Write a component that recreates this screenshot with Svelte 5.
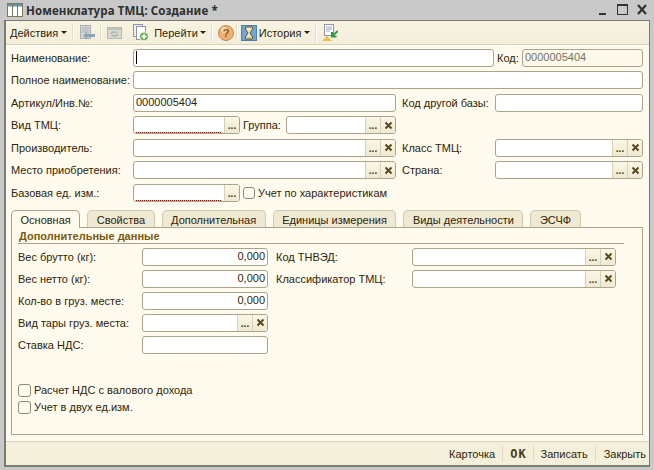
<script>
	const tabs = ['Основная', 'Свойства', 'Дополнительная', 'Единицы измерения', 'Виды деятельности', 'ЭСЧФ'];
</script>

{#snippet field(cls, opts = {})}
	<div class="field {cls}" class:off={opts.off}>
		<span class="val" class:req={opts.req} class:num={opts.num}>{#if opts.caret}<i class="caret"></i>{/if}{opts.value ?? ''}</span>
		{#if opts.pick}<span class="fbtn">...</span>{/if}
		{#if opts.clear}
			<span class="fbtn x">
				<svg viewBox="0 0 9 9" width="9" height="9"><path d="M1.500 1.500l6 6M7.500 1.500l-6 6" stroke="#54481a" stroke-width="1.900" fill="none"/></svg>
			</span>
		{/if}
	</div>
{/snippet}

{#snippet check(text)}
	<label class="check"><span class="box"></span>{text}</label>
{/snippet}

<div class="page">
	<div class="titlebar">
		<svg class="appicon" viewBox="0 0 16 14" width="16" height="14">
			<rect x="0.5" y="0.5" width="15" height="13" fill="#fff" stroke="#7d7a5c"/>
			<rect x="1" y="1" width="14" height="2.5" fill="#6f8fb0"/>
			<path d="M5.5 1v12M10.5 1v12" stroke="#7d7a5c"/>
		</svg>
		<span class="wintitle">Номенклатура ТМЦ: Создание *</span>
		<span class="caption">
			<svg viewBox="0 0 52 14" width="52" height="14">
				<path d="M2 11h7" stroke="#333" stroke-width="2"/>
				<rect x="20.5" y="1.5" width="10" height="10" fill="none" stroke="#333"/>
				<path d="M20 2h11" stroke="#333" stroke-width="2"/>
				<path d="M41 2l8 9M49 2l-8 9" stroke="#333" stroke-width="2.2"/>
			</svg>
		</span>
	</div>

	<div class="window">
		<div class="toolbar">
			<span class="tool first">Действия<i class="arrow"></i></span>
			<i class="sep"></i>
			<svg class="ico" viewBox="0 0 16 16" width="16" height="16">
				<rect x="1.5" y="0.5" width="10" height="13" fill="#d5d6d4" stroke="#a9aeb0"/>
				<path d="M3 3h7M3 5h7M3 7h7" stroke="#b0b4b6"/>
				<path d="M16 9v3H8v2.500L4 10.500 8 7v2z" fill="#8da2b3"/>
			</svg>
			<i class="sep"></i>
			<svg class="ico" viewBox="0 0 16 16" width="16" height="16">
				<rect x="0.500" y="2.500" width="14" height="11" fill="#d8dad2" stroke="#b4b8ae"/>
				<rect x="1" y="3" width="13" height="2" fill="#bcc2bc"/>
				<path d="M4 9a3.500 3 0 0 1 6-1M11 9a3.500 3 0 0 1-6 1" stroke="#9fb3a0" stroke-width="1.300" fill="none"/>
			</svg>
			<svg class="ico docs" viewBox="0 0 16 18" width="16" height="18">
				<rect x="0.500" y="0.500" width="9" height="12" fill="#eef0f2" stroke="#8b97a8"/>
				<rect x="3.500" y="2.500" width="9" height="13" fill="#fff" stroke="#8b97a8"/>
				<circle cx="11" cy="12.500" r="4.500" fill="#6fae5a" stroke="#fff"/>
				<path d="M11 10v5M8.500 12.500h5" stroke="#fff" stroke-width="1.600"/>
			</svg>
			<span class="tool go">Перейти<i class="arrow"></i></span>
			<i class="sep"></i>
			<svg class="ico" viewBox="0 0 16 16" width="16" height="16">
				<circle cx="8" cy="8" r="7.500" fill="#f2b070" stroke="#b98a5a"/>
				<circle cx="6" cy="5" r="3" fill="#f9d6ae"/>
				<text x="8" y="12" text-anchor="middle" class="q">?</text>
			</svg>
			<i class="sep tight"></i>
			<svg class="ico" viewBox="0 0 16 16" width="16" height="16">
				<rect x="0.500" y="0.500" width="15" height="15" fill="#6fa6d8" stroke="#4d7fb0"/>
				<path d="M4.500 2h7v2L9 8l2.500 4v2h-7v-2L7 8 4.500 4z" fill="#f0e6c0" stroke="#6b5a2a"/>
				<path d="M6 12.500h4v1H6z" fill="#c59a3a"/>
			</svg>
			<span class="tool hist">История<i class="arrow"></i></span>
			<i class="sep"></i>
			<svg class="ico" viewBox="0 0 16 18" width="16" height="18">
				<rect x="2.500" y="0.500" width="9" height="11" fill="#fff" stroke="#8b97a8"/>
				<path d="M4 3h6M4 5h6M4 7h4" stroke="#9aa6b4"/>
				<path d="M0 17l5-5 5 5z" fill="#e8bf50"/>
				<path d="M16 7l-6 5M10 8v4.500h4.500" stroke="#2f9a3c" stroke-width="2" fill="none"/>
			</svg>
		</div>

		<div class="form">
			<div class="row">
				<span class="lbl main">Наименование:</span>
				{@render field('w361', { caret: true })}
				<span class="lbl kod">Код:</span>
				{@render field('w121', { value: '0000005404', off: true })}
			</div>
			<div class="row">
				<span class="lbl main">Полное наименование:</span>
				{@render field('w510')}
			</div>
			<div class="row">
				<span class="lbl main">Артикул/Инв.№:</span>
				{@render field('w263', { value: '0000005404' })}
				<span class="lbl side">Код другой базы:</span>
				{@render field('w148')}
			</div>
			<div class="row">
				<span class="lbl main">Вид ТМЦ:</span>
				{@render field('w107', { req: true, pick: true })}
				<span class="lbl grp">Группа:</span>
				{@render field('w110', { pick: true, clear: true })}
			</div>
			<div class="row">
				<span class="lbl main">Производитель:</span>
				{@render field('w263', { pick: true, clear: true })}
				<span class="lbl side">Класс ТМЦ:</span>
				{@render field('w148', { pick: true, clear: true })}
			</div>
			<div class="row">
				<span class="lbl main">Место приобретения:</span>
				{@render field('w263', { pick: true, clear: true })}
				<span class="lbl side">Страна:</span>
				{@render field('w148', { pick: true, clear: true })}
			</div>
			<div class="row">
				<span class="lbl main">Базовая ед. изм.:</span>
				{@render field('w107', { req: true, pick: true })}
				{@render check('Учет по характеристикам')}
			</div>
		</div>

		<div class="tabs">
			{#each tabs as tab, i}
				<span class="tab" class:active={i === 0}>{tab}</span>
			{/each}
		</div>

		<div class="panel">
			<div class="heading">Дополнительные данные</div>
			<div class="cols">
				<div class="col left">
					<div class="row"><span class="lbl inner">Вес брутто (кг):</span>{@render field('w126', { value: '0,000', num: true })}</div>
					<div class="row"><span class="lbl inner">Вес нетто (кг):</span>{@render field('w126', { value: '0,000', num: true })}</div>
					<div class="row"><span class="lbl inner">Кол-во в груз. месте:</span>{@render field('w126', { value: '0,000', num: true })}</div>
					<div class="row"><span class="lbl inner">Вид тары груз. места:</span>{@render field('w126', { pick: true, clear: true })}</div>
					<div class="row"><span class="lbl inner">Ставка НДС:</span>{@render field('w126')}</div>
				</div>
				<div class="col right">
					<div class="row"><span class="lbl outer">Код ТНВЭД:</span>{@render field('w204', { pick: true, clear: true })}</div>
					<div class="row"><span class="lbl outer">Классификатор ТМЦ:</span>{@render field('w204', { pick: true, clear: true })}</div>
				</div>
			</div>
			<div class="checks">
				{@render check('Расчет НДС с валового дохода')}
				{@render check('Учет в двух ед.изм.')}
			</div>
		</div>

		<div class="footer">
			<span class="act">Карточка</span>
			<span class="act ok">OK</span>
			<span class="act">Записать</span>
			<span class="act last">Закрыть</span>
		</div>
	</div>
</div>

<style>
	:global(body) {
		margin: 0;
		background: #c9c9c9;
	}

	.page {
		width: 654px;
		height: 470px;
		box-sizing: border-box;
		padding: 0 4px 3px 4px;
		display: flex;
		flex-direction: column;
		font-family: "Liberation Sans", Arial, sans-serif;
		font-size: 11px;
		color: #2e2508;
		overflow: hidden;
	}

	.titlebar {
		height: 20px;
		flex-shrink: 0;
		display: flex;
		align-items: center;
		padding-left: 3px;
	}

	.appicon { margin-right: 3px; }

	.wintitle {
		font-family: "Noto Sans", sans-serif;
		font-weight: 700;
		font-size: 11.5px;
		letter-spacing: 0.1px;
		color: #30302e;
	}

	.caption {
		margin-left: auto;
		display: flex;
		margin-right: 1px;
	}

	.window {
		flex: 1;
		min-height: 0;
		display: flex;
		flex-direction: column;
		background: #fefaed;
		border: 1px solid #7b7b74;
		border-width: 1px 1px 2px 2px;
	}

	.toolbar {
		height: 24px;
		flex-shrink: 0;
		box-sizing: border-box;
		display: flex;
		align-items: center;
		background: linear-gradient(#f8f4e2, #f3eeda);
		border-bottom: 1px solid #d8d2b8;
		padding-left: 4px;
	}

	.tool {
		display: inline-flex;
		align-items: center;
		white-space: nowrap;
	}

	.arrow {
		width: 0;
		height: 0;
		border: 3px solid transparent;
		border-top: 3px solid #2a2208;
		border-bottom: 0;
		margin-left: 3px;
	}

	.sep {
		width: 2px;
		height: 18px;
		background: #e3ddc4;
		border-right: 1px solid #fff;
		box-sizing: border-box;
		margin: 0 5px;
	}

	.sep.tight { margin: 0 3px 0 2px; }
	.docs { margin-left: 10px; }
	.go { margin-left: 5px; }
	.go .arrow { margin-left: 2px; }
	.hist { margin-left: 2px; }
	.q { font: 700 11px "Liberation Sans", sans-serif; fill: #8a5a22; }

	.form {
		display: flex;
		flex-direction: column;
		gap: 4.5px;
		padding: 3.500px 6px 0 5px;
	}

	.row {
		display: flex;
		align-items: center;
		height: 18px;
	}

	.lbl { white-space: nowrap; flex-shrink: 0; }
	.main { width: 122px; }
	.kod { width: 25px; margin-left: 3px; }
	.side { width: 93px; margin-left: 6px; }
	.grp { width: 43px; margin-left: 3px; }
	.inner { width: 124px; }
	.outer { width: 136px; }

	.field {
		height: 18px;
		box-sizing: border-box;
		display: flex;
		flex-shrink: 0;
		background: #fff;
		border: 1px solid #aaa58a;
		border-radius: 3px;
		overflow: hidden;
	}

	.field.off { background: #fcf8ea; color: #77735e; }

	.w107 { width: 107px; }
	.w110 { width: 110px; }
	.w121 { width: 121px; }
	.w126 { width: 126px; }
	.w148 { width: 148px; }
	.w204 { width: 204px; }
	.w263 { width: 263px; }
	.w361 { width: 361px; }
	.w510 { width: 510px; }

	.val {
		flex: 1;
		min-width: 0;
		padding: 0 2px;
		line-height: 15px;
		display: flex;
		align-items: center;
	}

	.val.num { justify-content: flex-end; }

	.val.req {
		margin: 0 2px 0;
		padding: 0;
		background: repeating-linear-gradient(90deg, #a01010 0 1px, #f0b8b8 1px 2px) left bottom / 100% 1px no-repeat;
	}

	.caret { width: 1px; height: 13px; background: #000; }

	.fbtn {
		width: 15px;
		flex-shrink: 0;
		box-sizing: border-box;
		display: flex;
		align-items: flex-end;
		justify-content: center;
		background: linear-gradient(#fbf7e6, #efe9d2);
		border-left: 1px solid #d5d0b6;
		font-weight: 700;
		font-size: 10px;
		line-height: 14px;
		color: #4a3d10;
	}

	.fbtn.x { align-items: center; }

	.check {
		display: flex;
		align-items: center;
		white-space: nowrap;
	}

	.box {
		width: 12px;
		height: 12px;
		box-sizing: border-box;
		background: #fefcf2;
		border: 1px solid #8f8b72;
		border-radius: 3px;
		margin-right: 3px;
	}

	.row > .check { margin-left: 3px; }

	.tabs {
		display: flex;
		gap: 7px;
		height: 17px;
		flex-shrink: 0;
		margin-top: 8px;
		padding-left: 5px;
		position: relative;
		z-index: 1;
	}

	.tab {
		box-sizing: border-box;
		height: 17px;
		display: flex;
		align-items: center;
		padding: 2px 8.500px 0;
		background: #efe8d3;
		border: 1px solid #cfc9ae;
		border-bottom: 0;
		border-radius: 5px 5px 0 0;
	}

	.tab.active {
		background: #fefaed;
		height: 18px;
		border-color: #aaa58a;
	}

	.panel {
		height: 208px;
		flex-shrink: 0;
		box-sizing: border-box;
		margin: 0 5px;
		width: 632px;
		border: 1px solid #aaa58a;
		padding: 0 6px;
		display: flex;
		flex-direction: column;
	}

	.heading {
		font-weight: 700;
		color: #7a5a10;
		line-height: 14px;
		padding-top: 1px;
		padding-left: 1px;
		height: 14px;
		border-bottom: 1px solid #aaa58a;
		width: 605px;
	}

	.cols {
		display: flex;
		margin-top: 4px;
	}

	.col {
		display: flex;
		flex-direction: column;
		gap: 4px;
	}

	.right { margin-left: 8px; }

	.checks {
		margin-top: auto;
		margin-bottom: 20px;
		display: flex;
		flex-direction: column;
		gap: 4px;
	}

	.checks .box { width: 13px; height: 13px; }

	.footer {
		margin-top: auto;
		height: 24px;
		box-sizing: border-box;
		display: flex;
		align-items: center;
		justify-content: flex-end;
		background: #f4efdb;
		border-top: 1px solid #d8d2b8;
	}

	.act {
		padding: 0 7px;
		border-left: 1px solid #e0dac0;
		line-height: 16px;
	}

	.act:first-child { border-left: 0; }
	.act.last { padding: 0 3px 0 8px; }

	.ok {
		font-family: "DejaVu Sans Mono", monospace;
		font-weight: 700;
		font-size: 12px;
		letter-spacing: 1px;
		color: #4a3c10;
		padding: 0 6px 0 7px;
	}
</style>
